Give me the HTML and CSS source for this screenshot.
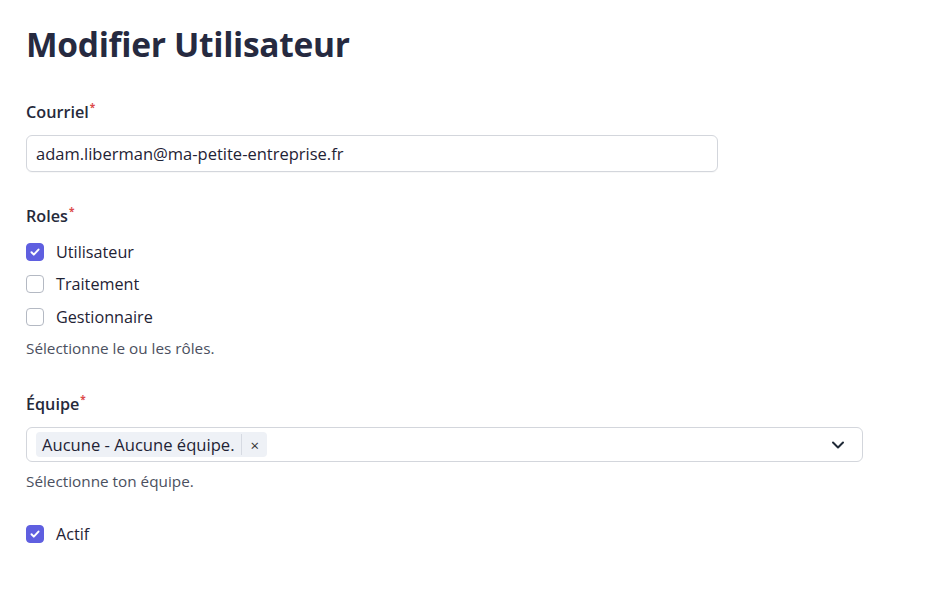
FILE: index.html
```html
<!DOCTYPE html>
<html lang="fr">
<head>
<meta charset="utf-8">
<title>Modifier Utilisateur</title>
<link rel="stylesheet" href="styles.css">
</head>
<body>
<main class="page">
  <h1 class="title">Modifier Utilisateur</h1>

  <div class="field field-email">
    <label class="label">Courriel<sup class="req">*</sup></label>
    <div class="input">adam.liberman@ma-petite-entreprise.fr</div>
  </div>

  <div class="field field-roles">
    <span class="label">Roles<sup class="req">*</sup></span>
    <ul class="checks">
      <li class="check-row"><span class="box checked"><svg viewBox="0 0 16 16" width="16" height="16"><path d="M4.5 8.3l2.3 2.3 4.7-5" fill="none" stroke="#fff" stroke-width="2" stroke-linecap="round" stroke-linejoin="round"/></svg></span><span class="check-label">Utilisateur</span></li>
      <li class="check-row"><span class="box"></span><span class="check-label">Traitement</span></li>
      <li class="check-row"><span class="box"></span><span class="check-label">Gestionnaire</span></li>
    </ul>
    <p class="help help-roles">Sélectionne le ou les rôles.</p>
  </div>

  <div class="field field-team">
    <span class="label">Équipe<sup class="req">*</sup></span>
    <div class="select">
      <span class="tag"><span class="tag-text">Aucune - Aucune équipe.</span><span class="tag-x">×</span></span>
      <svg class="chev" viewBox="0 0 20 20" width="20" height="20"><path d="M5 7.5l5 5 5-5" fill="none" stroke="#1f2937" stroke-width="2" stroke-linecap="round" stroke-linejoin="round"/></svg>
    </div>
    <p class="help help-team">Sélectionne ton équipe.</p>
  </div>

  <div class="check-row actif"><span class="box checked"><svg viewBox="0 0 16 16" width="16" height="16"><path d="M4.5 8.3l2.3 2.3 4.7-5" fill="none" stroke="#fff" stroke-width="2" stroke-linecap="round" stroke-linejoin="round"/></svg></span><span class="check-label">Actif</span></div>
</main>
</body>
</html>
```

FILE: styles.css
```css
* { box-sizing: border-box; }
html, body { margin: 0; padding: 0; background: #ffffff; }
body {
  font-family: "Open Sans", "Noto Sans", "Liberation Sans", sans-serif;
  color: #1f2335;
}
.page {
  padding: 22px 26px 0 26px;
  width: 948px;
}
.title {
  margin: 0;
  font-size: 33.5px;
  font-weight: 700;
  line-height: 44px;
  color: #262a40;
  letter-spacing: -0.3px;
}
.field { display: flex; flex-direction: column; }
.field-email { margin-top: 35px; }
.label {
  font-size: 16.2px;
  font-weight: 600;
  line-height: 22px;
  color: #262a3b;
}
.req {
  color: #dc4a4a;
  font-size: 10px;
  font-weight: 700;
  line-height: 0;
  vertical-align: top;
  position: relative;
  top: 6px;
  margin-left: 1px;
}
.input {
  margin-top: 12px;
  width: 692px;
  height: 37px;
  border: 1px solid #d3d6dc;
  border-radius: 6px;
  padding: 0 9px;
  font-size: 16.5px;
  line-height: 35px;
  color: #1f2335;
  box-shadow: 0 1px 1px rgba(0,0,0,0.03);
}
.field-roles { margin-top: 33px; }
.checks { list-style: none; margin: 13px 0 0 0; padding: 0; display: flex; flex-direction: column; gap: 9.5px; }
.check-row { display: flex; align-items: center; height: 23px; }
.box {
  width: 18px; height: 18px;
  border: 1px solid #b4b9c3;
  border-radius: 4px;
  background: #fff;
  display: flex; align-items: center; justify-content: center;
  flex: none;
}
.box.checked { background: #5f5fe0; border-color: #5f5fe0; }
.check-label { margin-left: 12px; font-size: 16.2px; color: #1f2335; }
.help { margin: 0; font-size: 15.3px; line-height: 20px; color: #4b5060; }
.help-roles { margin-top: 10px; }
.help-team { margin-top: 9px; }
.field-team { margin-top: 35px; }
.select {
  margin-top: 12px;
  width: 837px;
  height: 35px;
  border: 1px solid #d3d6dc;
  border-radius: 6px;
  padding: 0 14px 0 9px;
  display: flex; align-items: center; justify-content: space-between;
}
.tag {
  display: flex; align-items: center;
  height: 25px;
  background: #eef1f6;
  border-radius: 4px;
  font-size: 16.6px;
  color: #1f2335;
}
.tag-text { padding: 0 6px 0 6px; border-right: 1px solid #d6dae2; line-height: 21px; }
.tag-x { padding: 0 8px 0 9px; font-size: 15px; color: #333; }
.chev { display: block; }
.actif { margin-top: 31px; }
```
